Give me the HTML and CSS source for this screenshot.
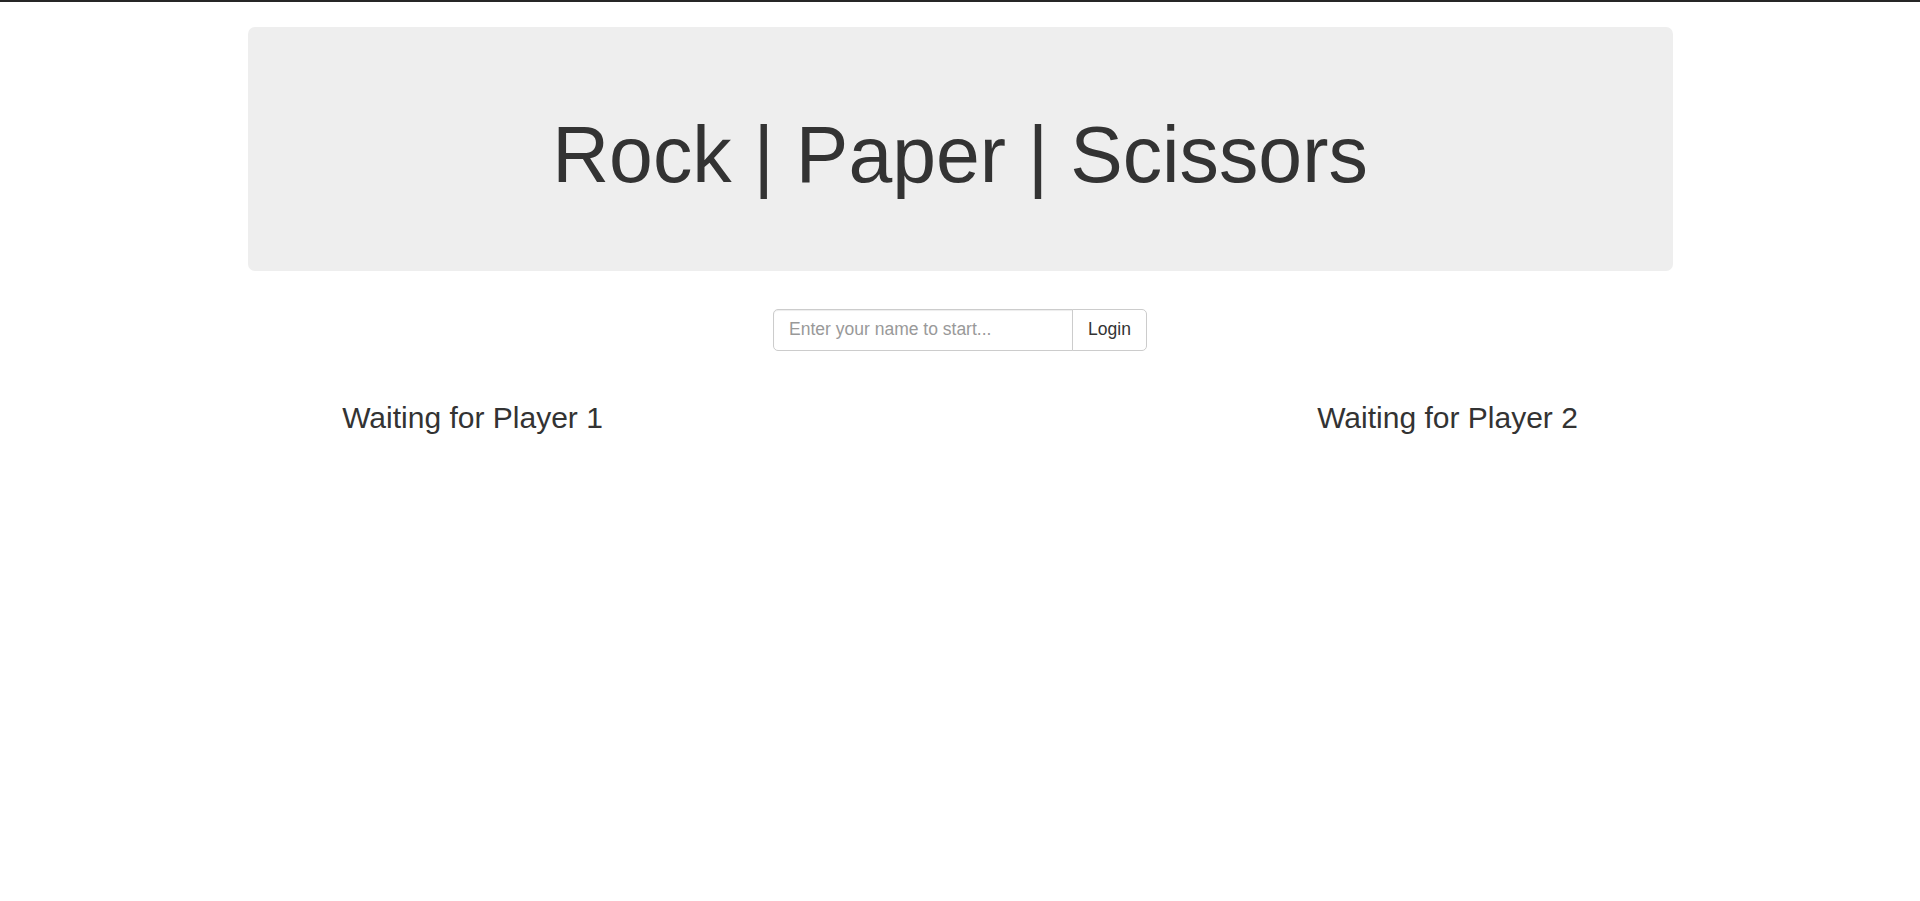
FILE: index.html
```html
<!DOCTYPE html>
<html lang="en">
<head>
<meta charset="utf-8">
<title>Rock | Paper | Scissors</title>
<link rel="stylesheet" href="styles.css">
</head>
<body>
<div class="topbar"></div>
<div class="container">
  <div class="jumbotron">
    <h1 class="title">Rock | Paper | Scissors</h1>
  </div>
  <div class="login">
    <div class="input-group">
      <input class="name-input" type="text" placeholder="Enter your name to start...">
      <button class="login-btn" type="button">Login</button>
    </div>
  </div>
  <div class="players">
    <div class="col"><h3 class="player">Waiting for Player 1</h3></div>
    <div class="col"></div>
    <div class="col"><h3 class="player">Waiting for Player 2</h3></div>
  </div>
</div>
</body>
</html>
```

FILE: styles.css
```css
* {
  box-sizing: border-box;
}
html, body {
  margin: 0;
  padding: 0;
  background: #fff;
}
body {
  font-family: "Liberation Sans", Arial, Helvetica, sans-serif;
  font-size: 17.5px;
  line-height: 1.42857;
  color: #333;
}
.topbar {
  height: 2px;
  background: #262626;
}
.container {
  width: 1462.5px;
  margin: 0 auto;
  padding: 25px 18.75px 0;
}
.jumbotron {
  background: #eee;
  border-radius: 7px;
  padding: 60px 75px;
  margin-bottom: 37.5px;
}
.title {
  margin: 25px 0 12.5px;
  font-size: 78.75px;
  line-height: 1.1;
  font-weight: normal;
  text-align: center;
  color: #333;
}
.login {
  display: flex;
  justify-content: center;
}
.input-group {
  display: flex;
  height: 42.5px;
}
.name-input {
  width: 300px;
  height: 42.5px;
  padding: 0 15px;
  border: 1px solid #ccc;
  border-radius: 5px 0 0 5px;
  box-shadow: inset 0 1px 1px rgba(0,0,0,.075);
  font-family: inherit;
  font-size: 17.5px;
  color: #555;
  outline: none;
  background: #fff;
}
.name-input::placeholder {
  color: #999;
}
.login-btn {
  height: 42.5px;
  margin-left: -1px;
  padding: 0 15px;
  border: 1px solid #ccc;
  border-radius: 0 5px 5px 0;
  background: #fff;
  font-family: inherit;
  font-size: 17.5px;
  color: #333;
  cursor: pointer;
}
.players {
  display: grid;
  grid-template-columns: repeat(3, 1fr);
  margin: 0 -18.75px;
  padding-top: 25px;
}
.col {
  padding: 0 18.75px;
  text-align: center;
}
.player {
  margin: 25px 0 12.5px;
  font-size: 30px;
  line-height: 1.1;
  font-weight: normal;
  color: #333;
}
```
